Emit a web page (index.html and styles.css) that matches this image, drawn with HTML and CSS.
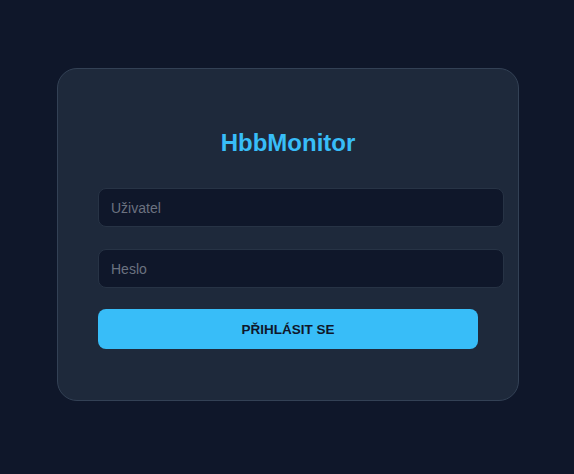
FILE: index.html
```
<!DOCTYPE html>
<html lang="cs">
<head>
<meta charset="utf-8">
<title>HbbMonitor</title>
<link rel="stylesheet" href="styles.css">
</head>
<body>
<main class="page">
  <section class="card">
    <h1 class="title">HbbMonitor</h1>
    <form class="form">
      <input class="field" type="text" placeholder="Uživatel">
      <input class="field field-second" type="password" placeholder="Heslo">
      <button class="btn" type="button">PŘIHLÁSIT SE</button>
    </form>
  </section>
</main>
</body>
</html>
```
FILE: styles.css
```
html, body {
  margin: 0;
  padding: 0;
  background: #0f172a;
  font-family: "Liberation Sans", Arial, sans-serif;
}
.page {
  height: 474px;
  display: flex;
  justify-content: center;
  align-items: flex-start;
  padding: 68px 0 0 2px;
  box-sizing: border-box;
}
.card {
  width: 462px;
  box-sizing: border-box;
  background: #1e293b;
  border: 1px solid #334155;
  border-radius: 20px;
  padding: 40px 40px 51px;
}
.title {
  margin: 20px 0 31px;
  text-align: center;
  color: #38bdf8;
  font-size: 24px;
  line-height: 28px;
  font-weight: 700;
}
.form {
  display: flex;
  flex-direction: column;
  align-items: flex-start;
  gap: 21px;
  margin: 0;
}
.field {
  box-sizing: content-box;
  width: 100%;
  height: 37px;
  padding: 0 12px;
  margin: 0;
  border: 1px solid #273345;
  border-radius: 8px;
  background: #0f172a;
  color: #e2e8f0;
  font-family: "Liberation Sans", Arial, sans-serif;
  font-size: 14px;
  outline: none;
}
.field-second {
  margin-top: 1px;
}
.field::placeholder {
  color: #6b7280;
}
.btn {
  width: 100%;
  height: 40px;
  margin: 0;
  border: 0;
  border-radius: 8px;
  background: #38bdf8;
  color: #0f172a;
  font-family: "Liberation Sans", Arial, sans-serif;
  font-size: 13.5px;
  font-weight: 700;
  cursor: pointer;
}
```
